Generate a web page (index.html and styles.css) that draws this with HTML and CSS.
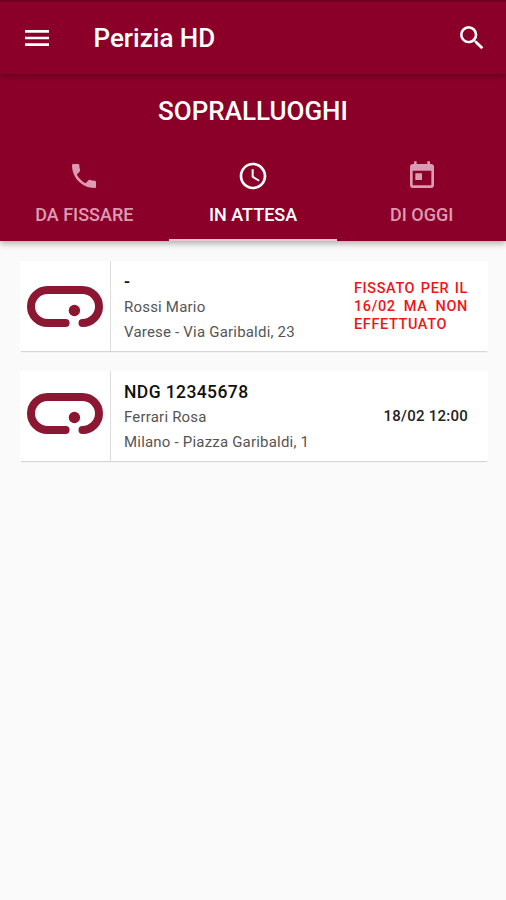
FILE: index.html
```html
<!DOCTYPE html>
<html lang="it">
<head>
    <meta charset="utf-8">
    <title>Perizia HD</title>
    <link rel="stylesheet" href="styles.css">
</head>
<body>
    <header class="toolbar">
        <svg class="icon" viewBox="0 0 24 24"><path d="M3 18h18v-2H3v2zm0-5h18v-2H3v2zm0-7v2h18V6H3z"/></svg>
        <h1>Perizia HD</h1>
        <svg class="icon search" viewBox="0 0 24 24"><path d="M15.5 14h-.79l-.28-.27A6.471 6.471 0 0 0 16 9.5 6.5 6.5 0 1 0 9.5 16c1.61 0 3.09-.59 4.23-1.57l.27.28v.79l5 4.99L20.49 19l-4.99-5zm-6 0C7.01 14 5 11.99 5 9.5S7.01 5 9.5 5 14 7.01 14 9.5 11.99 14 9.5 14z"/></svg>
    </header>

    <section class="heading">
        <h2>SOPRALLUOGHI</h2>
        <nav class="tabs">
            <a class="tab">
                <svg class="icon" viewBox="0 0 24 24"><path d="M6.62 10.79c1.44 2.83 3.76 5.14 6.59 6.59l2.2-2.2c.27-.27.67-.36 1.02-.24 1.12.37 2.33.57 3.57.57.55 0 1 .45 1 1V20c0 .55-.45 1-1 1-9.39 0-17-7.61-17-17 0-.55.45-1 1-1h3.5c.55 0 1 .45 1 1 0 1.25.2 2.45.57 3.57.11.35.03.74-.25 1.02l-2.2 2.2z"/></svg>
                <span>DA FISSARE</span>
            </a>
            <a class="tab active">
                <svg class="icon" viewBox="0 0 24 24"><path d="M11.99 2C6.47 2 2 6.48 2 12s4.47 10 9.99 10C17.52 22 22 17.52 22 12S17.52 2 11.99 2zM12 20c-4.42 0-8-3.58-8-8s3.58-8 8-8 8 3.58 8 8-3.58 8-8 8zm.5-13H11v6l5.25 3.15.75-1.23-4.5-2.67z"/></svg>
                <span>IN ATTESA</span>
            </a>
            <a class="tab">
                <svg class="icon" viewBox="0 0 24 24"><path d="M19 3h-1V1h-2v2H8V1H6v2H5c-1.11 0-1.99.9-1.99 2L3 19c0 1.1.89 2 2 2h14c1.1 0 2-.9 2-2V5c0-1.1-.9-2-2-2zm0 16H5V8h14v11zM7 10h5v5H7z"/></svg>
                <span>DI OGGI</span>
            </a>
        </nav>
    </section>

    <main class="list">
        <article class="card">
            <div class="logo">
                <svg viewBox="0 0 76 41">
                    <path d="M38.6 37H20.5A16.5 16.5 0 0 1 20.5 4H55.5A16.5 16.5 0 0 1 55.5 37"/>
                    <circle cx="47.4" cy="24.5" r="5.7"/>
                </svg>
            </div>
            <div class="info">
                <h3>-</h3>
                <p>Rossi Mario</p>
                <p class="address">Varese - Via Garibaldi, 23</p>
            </div>
            <div class="status late">FISSATO PER IL 16/02 MA NON EFFETTUATO</div>
        </article>

        <article class="card">
            <div class="logo raised">
                <svg viewBox="0 0 76 41">
                    <path d="M38.6 37H20.5A16.5 16.5 0 0 1 20.5 4H55.5A16.5 16.5 0 0 1 55.5 37"/>
                    <circle cx="47.4" cy="24.5" r="5.7"/>
                </svg>
            </div>
            <div class="info">
                <h3>NDG 12345678</h3>
                <p>Ferrari Rosa</p>
                <p class="address">Milano - Piazza Garibaldi, 1</p>
            </div>
            <div class="status">18/02 12:00</div>
        </article>
    </main>
</body>
</html>
```
FILE: styles.css
```css
* {
    box-sizing: border-box;
}

body {
    margin: 0;
    min-height: 100vh;
    background: #fafafa;
    font-family: Roboto, sans-serif;
}

h1, h2, h3, p {
    margin: 0;
    font-weight: 500;
}

.icon {
    display: block;
    width: 32px;
    height: 32px;
    fill: currentColor;
}

.toolbar {
    position: relative;
    display: flex;
    align-items: center;
    height: 74px;
    padding: 0 18px 0 20.5px;
    background: #8b0029;
    color: #fff;
    border-top: 2px solid #74001f;
    box-shadow: 0 2px 6px rgba(0,0,0,0.3);
}

.toolbar h1 {
    margin-left: 41px;
    font-size: 26px;
}

.search {
    margin-left: auto;
}

.heading {
    height: 167px;
    padding-top: 21px;
    background: #8b0029;
    color: #fff;
    box-shadow: 0 2px 7px rgba(0,0,0,0.35);
}

.heading h2 {
    font-size: 26px;
    line-height: 32px;
    text-align: center;
}

.tabs {
    display: flex;
    margin-top: 33px;
}

.tab {
    flex: 1;
    display: flex;
    flex-direction: column;
    align-items: center;
    height: 81px;
    font-size: 18px;
    font-weight: 500;
    line-height: 22px;
    color: #dc9bb2;
    border-bottom: 2px solid transparent;
}

.tab span {
    margin-top: 12px;
}

.tab.active {
    color: #fff;
    border-bottom-color: #e8c8d2;
}

.list {
    display: flex;
    flex-direction: column;
    gap: 20px;
    padding: 20px 18px 0 20px;
}

.card {
    display: flex;
    height: 90px;
    background: #fff;
    box-shadow: 0 2px 1px -1px rgba(0,0,0,0.14);
}

.logo {
    display: flex;
    align-items: center;
    width: 91px;
    padding-left: 6.5px;
    border-right: 1px solid #dcdcdc;
}

.logo.raised {
    padding-bottom: 6px;
}

.logo svg {
    width: 76px;
    height: 41px;
    fill: #8c1732;
}

.logo path {
    fill: none;
    stroke: #8c1732;
    stroke-width: 8;
    stroke-linecap: round;
}

.info {
    flex: 1;
    padding: 9px 0 0 13px;
    color: #555;
}

.info h3 {
    font-size: 17.5px;
    line-height: 24px;
    letter-spacing: 0.4px;
    color: #111;
}

.info p {
    font-size: 15px;
    font-weight: 400;
    line-height: 25px;
    letter-spacing: 0.2px;
    padding-top: 1px;
}

.info .address {
    padding-top: 0;
    line-height: 24px;
}

.status {
    align-self: center;
    margin-right: 20px;
    font-size: 15px;
    font-weight: 500;
    line-height: 18px;
    letter-spacing: 0.25px;
    color: #222;
}

.status.late {
    width: 114px;
    padding-top: 2px;
    font-size: 14.5px;
    letter-spacing: 0.6px;
    color: #f01414;
    text-align: justify;
}
```
